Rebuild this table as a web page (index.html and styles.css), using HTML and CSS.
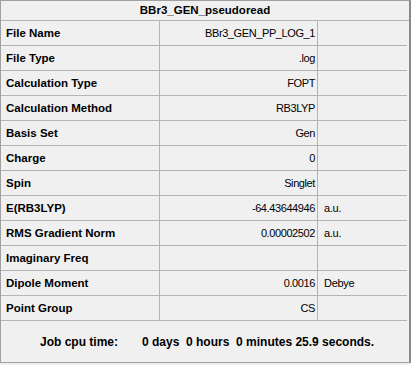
FILE: index.html
```html
<!DOCTYPE html>
<html>
<head>
<meta charset="utf-8">
<link rel="stylesheet" href="styles.css">
</head>
<body>
<div class="panel">
  <div class="title">BBr3_GEN_pseudoread</div>
  <div class="grid">
    <div class="lab">File Name</div><div class="val">BBr3_GEN_PP_LOG_1</div><div class="unit"></div>
    <div class="lab">File Type</div><div class="val">.log</div><div class="unit"></div>
    <div class="lab">Calculation Type</div><div class="val">FOPT</div><div class="unit"></div>
    <div class="lab">Calculation Method</div><div class="val">RB3LYP</div><div class="unit"></div>
    <div class="lab">Basis Set</div><div class="val">Gen</div><div class="unit"></div>
    <div class="lab">Charge</div><div class="val">0</div><div class="unit"></div>
    <div class="lab">Spin</div><div class="val">Singlet</div><div class="unit"></div>
    <div class="lab">E(RB3LYP)</div><div class="val">-64.43644946</div><div class="unit">a.u.</div>
    <div class="lab">RMS Gradient Norm</div><div class="val">0.00002502</div><div class="unit">a.u.</div>
    <div class="lab">Imaginary Freq</div><div class="val"></div><div class="unit"></div>
    <div class="lab">Dipole Moment</div><div class="val">0.0016</div><div class="unit">Debye</div>
    <div class="lab">Point Group</div><div class="val">CS</div><div class="unit"></div>
  </div>
  <div class="footer">
    <span class="job">Job cpu time:</span>
    <span class="time">0 days&nbsp;&nbsp;0 hours&nbsp;&nbsp;0 minutes 25.9 seconds.</span>
  </div>
</div>
</body>
</html>
```
FILE: styles.css
```css
html, body {
  margin: 0;
  padding: 0;
  background: #f0f0f0;
}
.panel {
  width: 408px;
  border-left: 1px solid #a0a0a0;
  border-top: 1px solid #a0a0a0;
  border-right: 2px solid #868b91;
  border-bottom: 1px solid #a0a0a0;
  background: #f0f0f0;
  color: #000;
  font-family: "Liberation Sans", Arial, sans-serif;
}
.title {
  height: 19px;
  line-height: 19px;
  text-align: center;
  font-weight: bold;
  font-size: 11.5px;
  border-bottom: 1px solid #b4b4b4;
}
.grid {
  display: grid;
  grid-template-columns: 159px 158px 89px;
}
.grid > div {
  height: 24px;
  line-height: 24px;
  border-bottom: 1px solid #b4b4b4;
  white-space: nowrap;
  overflow: hidden;
}
.lab {
  border-right: 1px solid #b4b4b4;
  padding-left: 5px;
  font-weight: bold;
  font-size: 11.5px;
}
.val {
  border-right: 1px solid #b4b4b4;
  text-align: right;
  padding-right: 2px;
  font-size: 11px;
  letter-spacing: -0.4px;
}
.unit {
  padding-left: 6px;
  font-size: 11px;
  letter-spacing: -0.3px;
}
.footer {
  height: 41px;
  display: flex;
  align-items: center;
  padding-left: 39px;
  font-weight: bold;
  font-size: 12px;
}
.job {
  width: 102px;
}
```
